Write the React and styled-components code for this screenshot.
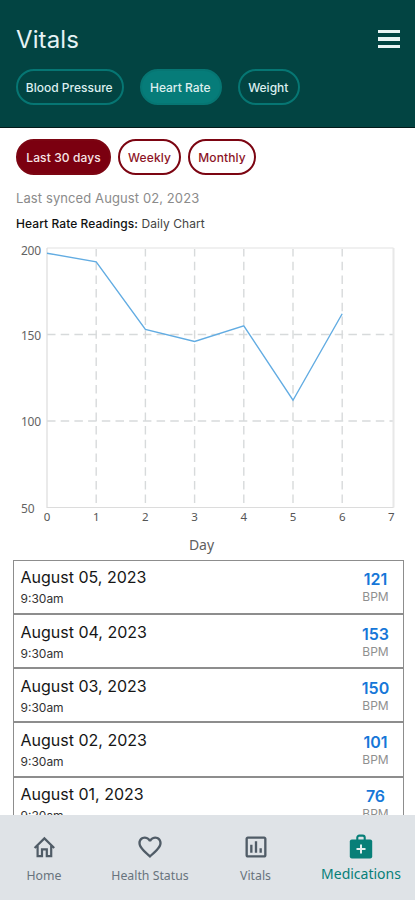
import React from "react";
import styled, { createGlobalStyle, css } from "styled-components";
import { MdFavoriteBorder, MdOutlineAssessment } from "react-icons/md";

const GlobalStyle = createGlobalStyle`
  * {
    box-sizing: border-box;
  }

  body {
    margin: 0;
    background-color: #fff;
    font-family: Inter, "Liberation Sans", sans-serif;
  }
`;

const Screen = styled.div`
  display: flex;
  flex-direction: column;
  width: 415px;
  height: 900px;
  overflow: hidden;
`;

const Header = styled.header`
  flex-shrink: 0;
  height: 128px;
  padding: 23px 15px 0 16px;
  background-color: #024442;
  border-bottom: 1px solid #031b1a;
`;

const HeaderTop = styled.div`
  display: flex;
  justify-content: space-between;
  align-items: center;
  height: 32px;
`;

const Title = styled.h1`
  margin: 0;
  padding-top: 2px;
  font-size: 24px;
  font-weight: 400;
  line-height: 32px;
  letter-spacing: 0.1px;
  color: #e6f3f5;
`;

const MenuButton = styled.button`
  display: flex;
  flex-direction: column;
  gap: 4px;
  width: 22px;
  padding: 0;
  border: 0;
  background: none;
`;

const MenuBar = styled.span`
  height: 3.3px;
  background-color: #eaf4f4;
`;

const Tabs = styled.div`
  display: flex;
  gap: 16px;
  margin-top: 14px;
`;

const Pill = styled.button`
  width: ${(props) => props.$width}px;
  height: 36px;
  padding: 0;
  border-radius: 18px;
  font-family: inherit;
  font-size: 12px;
  font-weight: 500;
  white-space: nowrap;
`;

const Tab = styled(Pill)`
  padding-right: 1.5px;
  border: 2px solid #067673;
  background-color: ${(props) => (props.$active ? "#067c79" : "transparent")};
  color: #dcefef;
`;

const FilterPill = styled(Pill)`
  border: 2px solid #7c0512;
  letter-spacing: 0.1px;
  ${(props) =>
    props.$active
      ? css`
          background-color: #7b0010;
          color: #f7e4e6;
        `
      : css`
          background-color: #fff;
          color: #8c1426;
        `}
`;

const Main = styled.main`
  display: flex;
  flex-direction: column;
  flex: 1;
  min-height: 0;
  overflow: hidden;
`;

const Filters = styled.div`
  display: flex;
  gap: 7px;
  flex-shrink: 0;
  padding: 11px 16px 0;
`;

const Synced = styled.p`
  flex-shrink: 0;
  margin: 14px 16px 0;
  font-size: 13px;
  line-height: 18px;
  letter-spacing: 0.1px;
  color: #8b8b8b;
`;

const ChartTitle = styled.p`
  flex-shrink: 0;
  margin: 9px 16px -1px;
  font-size: 12px;
  line-height: 16px;
  letter-spacing: 0.07px;
  color: #444;

  strong {
    font-weight: 500;
    color: #111;
  }
`;

const Chart = styled.svg`
  display: block;
  flex-shrink: 0;
  width: 415px;
  height: 329px;
  font-family: "Noto Sans", sans-serif;
`;

const Readings = styled.ul`
  flex-shrink: 0;
  margin: 0 11px 0 13px;
  padding: 0;
  list-style: none;
`;

const Reading = styled.li`
  display: flex;
  justify-content: space-between;
  height: 54.15px;
  padding: 6.4px 11px 0 6.5px;
  border: 1px solid #8d8d8d;
`;

const ReadingDate = styled.div`
  font-size: 16px;
  line-height: 20px;
  color: #161616;
`;

const ReadingTime = styled.div`
  margin-top: 4px;
  font-size: 12px;
  line-height: 16px;
  color: #333;
`;

const ReadingValue = styled.div`
  width: 33px;
  padding-top: 2px;
  text-align: center;
`;

const Bpm = styled.div`
  font-size: 16px;
  font-weight: 600;
  line-height: 20px;
  color: #1677d8;
`;

const Unit = styled.div`
  font-size: 12px;
  line-height: 15px;
  color: #8f8f8f;
`;

const BottomNav = styled.nav`
  display: grid;
  grid-template-columns: 88px 124px 87px 124px;
  flex-shrink: 0;
  height: 85px;
  background-color: #dfe3e7;
  font-family: "Noto Sans", sans-serif;
`;

const NavItem = styled.a`
  display: flex;
  flex-direction: column;
  align-items: center;
  padding-top: 18px;
  font-size: ${(props) => (props.$active ? 14 : 12.3)}px;
  line-height: 20px;
  white-space: nowrap;
  color: ${(props) => (props.$active ? "#077f78" : "#68737d")};

  svg {
    width: 28px;
    height: 28px;
    margin-bottom: ${(props) => (props.$active ? 3 : 5)}px;
    color: ${(props) => (props.$active ? "#077f78" : "#505c67")};
  }
`;

const HomeIcon = () => (
  <svg viewBox="0 0 28 28" fill="none" stroke="currentColor" strokeWidth="2.2">
    <path d="M4.6 15 14.4 5.4l9.8 9.6M7.6 12.6V23.2H12V16.4H16.8V23.2H21.2V12.6" />
  </svg>
);

const MedicalBagIcon = () => (
  <svg viewBox="0 0 28 28" fill="none">
    <rect x="2.8" y="6.5" width="22.4" height="19" rx="2" fill="currentColor" />
    <path
      d="M10.3 7V4.6a2 2 0 0 1 2-2h3.4a2 2 0 0 1 2 2V7"
      stroke="currentColor"
      strokeWidth="2.1"
    />
    <path d="M14 11.6v9M9.5 16.1h9" stroke="#e3eeee" strokeWidth="2" />
  </svg>
);

const rates = [197, 192, 153, 146, 155, 112, 162];

const readings = [
  { date: "August 05, 2023", bpm: 121 },
  { date: "August 04, 2023", bpm: 153 },
  { date: "August 03, 2023", bpm: 150 },
  { date: "August 02, 2023", bpm: 101 },
  { date: "August 01, 2023", bpm: 76 },
];

const left = 47;
const right = 393.5;
const top = 17;
const bottom = 276.5;
const dayX = (day) => left + day * 49.2;
const rateY = (rate) => bottom - ((rate - 50) / 150) * (bottom - top);

const HeartRateChart = () => (
  <Chart viewBox="0 0 415 329">
    <g stroke="#d7dadb" strokeWidth="1.4" strokeDasharray="8.5 5.2">
      {[1, 2, 3, 4, 5, 6].map((day) => (
        <path key={day} d={`M${dayX(day)} ${top}V${bottom}`} />
      ))}
      {[150, 100].map((rate) => (
        <path key={rate} d={`M${left} ${rateY(rate)}H${right}`} />
      ))}
    </g>
    <path d={`M${left} ${top}H${right}`} stroke="#f0f0f0" strokeWidth="2" />
    <path d={`M${right} ${top}V${bottom}`} stroke="#e8e8e8" strokeWidth="2" />
    <path
      d={`M${left} ${top}V${bottom}H${right}`}
      fill="none"
      stroke="#dcdcdc"
      strokeWidth="1.2"
    />
    <polyline
      points={rates.map((rate, day) => `${dayX(day)},${rateY(rate)}`).join(" ")}
      fill="none"
      stroke="#62ace2"
      strokeWidth="1.4"
    />
    <g fontSize="12" fill="#636363">
      {[200, 150, 100, 50].map((rate) => (
        <text
          key={rate}
          x="21"
          y={rateY(rate) + (rate === 200 ? 7 : 5)}
          textLength={rate === 50 ? 13.5 : 20}
        >
          {rate}
        </text>
      ))}
    </g>
    <g fontSize="11.5" fill="#555" textAnchor="middle">
      {[0, 1, 2, 3, 4, 5, 6, 7].map((day) => (
        <text key={day} x={dayX(day)} y="290">
          {day}
        </text>
      ))}
    </g>
    <text x="201.5" y="319" fontSize="14" fill="#606060" textAnchor="middle">
      Day
    </text>
  </Chart>
);

const App = () => {
  return (
    <Screen>
      <GlobalStyle />
      <Header>
        <HeaderTop>
          <Title>Vitals</Title>
          <MenuButton aria-label="Menu">
            <MenuBar />
            <MenuBar />
            <MenuBar />
          </MenuButton>
        </HeaderTop>
        <Tabs>
          <Tab $width={108}>Blood Pressure</Tab>
          <Tab $width={82} $active>
            Heart Rate
          </Tab>
          <Tab $width={62}>Weight</Tab>
        </Tabs>
      </Header>
      <Main>
        <Filters>
          <FilterPill $width={95} $active>
            Last 30 days
          </FilterPill>
          <FilterPill $width={63}>Weekly</FilterPill>
          <FilterPill $width={68}>Monthly</FilterPill>
        </Filters>
        <Synced>Last synced August 02, 2023</Synced>
        <ChartTitle>
          <strong>Heart Rate Readings:</strong> Daily Chart
        </ChartTitle>
        <HeartRateChart />
        <Readings>
          {readings.map((reading) => (
            <Reading key={reading.date}>
              <div>
                <ReadingDate>{reading.date}</ReadingDate>
                <ReadingTime>9:30am</ReadingTime>
              </div>
              <ReadingValue>
                <Bpm>{reading.bpm}</Bpm>
                <Unit>BPM</Unit>
              </ReadingValue>
            </Reading>
          ))}
        </Readings>
      </Main>
      <BottomNav>
        <NavItem>
          <HomeIcon />
          Home
        </NavItem>
        <NavItem>
          <MdFavoriteBorder />
          Health Status
        </NavItem>
        <NavItem>
          <MdOutlineAssessment />
          Vitals
        </NavItem>
        <NavItem $active>
          <MedicalBagIcon />
          Medications
        </NavItem>
      </BottomNav>
    </Screen>
  );
};

export default App;
